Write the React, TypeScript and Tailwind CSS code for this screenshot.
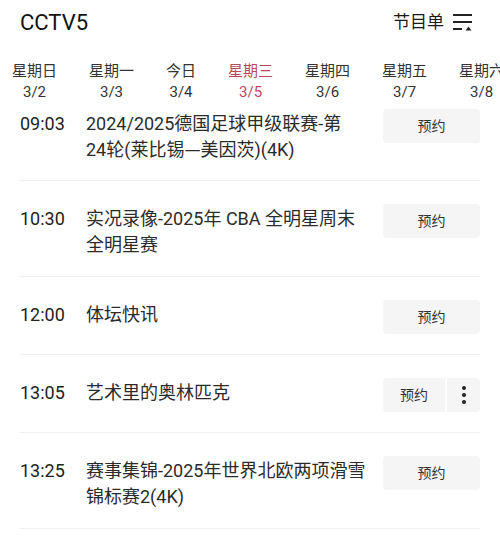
import React from "react";

const days = [
  { label: "星期日", date: "3/2" },
  { label: "星期一", date: "3/3" },
  { label: "今日", date: "3/4" },
  { label: "星期三", date: "3/5", active: true },
  { label: "星期四", date: "3/6" },
  { label: "星期五", date: "3/7" },
  { label: "星期六", date: "3/8" },
];

type Program = {
  time: string;
  lines: React.ReactNode[];
  more?: boolean;
};

const cjk = { fontFamily: '"Noto Sans CJK SC", sans-serif' };

const programs: Program[] = [
  {
    time: "09:03",
    lines: [
      "2024/2025德国足球甲级联赛-第",
      <>
        24轮(莱比锡
        <span className="leading-none" style={cjk}>
          —
        </span>
        美因茨)(4K)
      </>,
    ],
  },
  { time: "10:30", lines: ["实况录像-2025年 CBA 全明星周末", "全明星赛"] },
  { time: "12:00", lines: ["体坛快讯"] },
  { time: "13:05", lines: ["艺术里的奥林匹克"], more: true },
  { time: "13:25", lines: ["赛事集锦-2025年世界北欧两项滑雪", "锦标赛2(4K)"] },
  // next row is only just peeking in at the bottom
  { time: "", lines: [] },
];

function MenuIcon() {
  return (
    <svg width="22" height="20" viewBox="0 0 22 20" fill="none">
      <rect x="1" y="1" width="19" height="2" fill="#222" />
      <rect x="1" y="8" width="19" height="2" fill="#222" />
      <rect x="1" y="15" width="9" height="2" fill="#222" />
      <path d="M13.5 17.5 L16.5 13.5 L19.5 17.5 Z" fill="#222" />
    </svg>
  );
}

function ProgramRow({ program, first }: { program: Program; first?: boolean }) {
  const twoLines = program.lines.length > 1;
  let pad = "pt-[23px] pb-[20px]";
  if (first) pad = "pt-[5px] pb-[17px]";
  else if (twoLines) pad = "pt-[23px] pb-[18px]";

  return (
    <div className={`mx-5 flex items-start border-b border-[#f1f1f1] ${pad}`}>
      <div className="mt-[2px] w-[66px] shrink-0 text-[18px] leading-[26px] text-[#222]">
        {program.time}
      </div>
      <div className="mt-[2px] flex-1 text-[18px] leading-[26px] text-[#2b2b2b]">
        {program.lines.map((line, i) => (
          <div key={i} className="h-[26px] whitespace-nowrap">
            {line}
          </div>
        ))}
      </div>
      {program.more ? (
        <div className="flex shrink-0 gap-[2px]">
          <button className="flex h-[34px] w-[62px] items-center justify-center rounded-l-[4px] bg-[#f5f5f5] text-[14px] text-[#333]">
            预约
          </button>
          <button className="flex h-[34px] w-[33px] flex-col items-center justify-center gap-[3px] rounded-r-[4px] bg-[#f5f5f5]">
            <span className="h-[4px] w-[4px] rounded-full bg-[#222]" />
            <span className="h-[4px] w-[4px] rounded-full bg-[#222]" />
            <span className="h-[4px] w-[4px] rounded-full bg-[#222]" />
          </button>
        </div>
      ) : (
        <button className="flex h-[34px] w-[97px] shrink-0 items-center justify-center rounded-[4px] bg-[#f5f5f5] text-[14px] text-[#333]">
          预约
        </button>
      )}
    </div>
  );
}

export default function App() {
  return (
    <div
      className="h-[552px] w-[500px] overflow-hidden bg-white"
      style={{ fontFamily: 'Roboto, "Noto Sans CJK SC", sans-serif' }}
    >
      <header className="flex h-[46px] items-center justify-between pl-5 pr-[26px]">
        <h1 className="text-[22px] leading-none text-[#111]">CCTV5</h1>
        <div className="flex items-center gap-[8px]">
          <span className="text-[17px] text-[#1a1a1a]">节目单</span>
          <MenuIcon />
        </div>
      </header>

      <nav className="mt-[15px] flex gap-[32px] overflow-hidden whitespace-nowrap pl-[12px]">
        {days.map((d) => (
          <div
            key={d.label}
            className={`flex shrink-0 flex-col items-center text-[15px] leading-[21px] ${
              d.active ? "text-[#b9475c]" : "text-[#333]"
            }`}
          >
            <span>{d.label}</span>
            <span>{d.date}</span>
          </div>
        ))}
      </nav>

      <div className="mt-[1px]">
        {programs.map((p, i) => (
          <ProgramRow key={i} program={p} first={i === 0} />
        ))}
      </div>
    </div>
  );
}
